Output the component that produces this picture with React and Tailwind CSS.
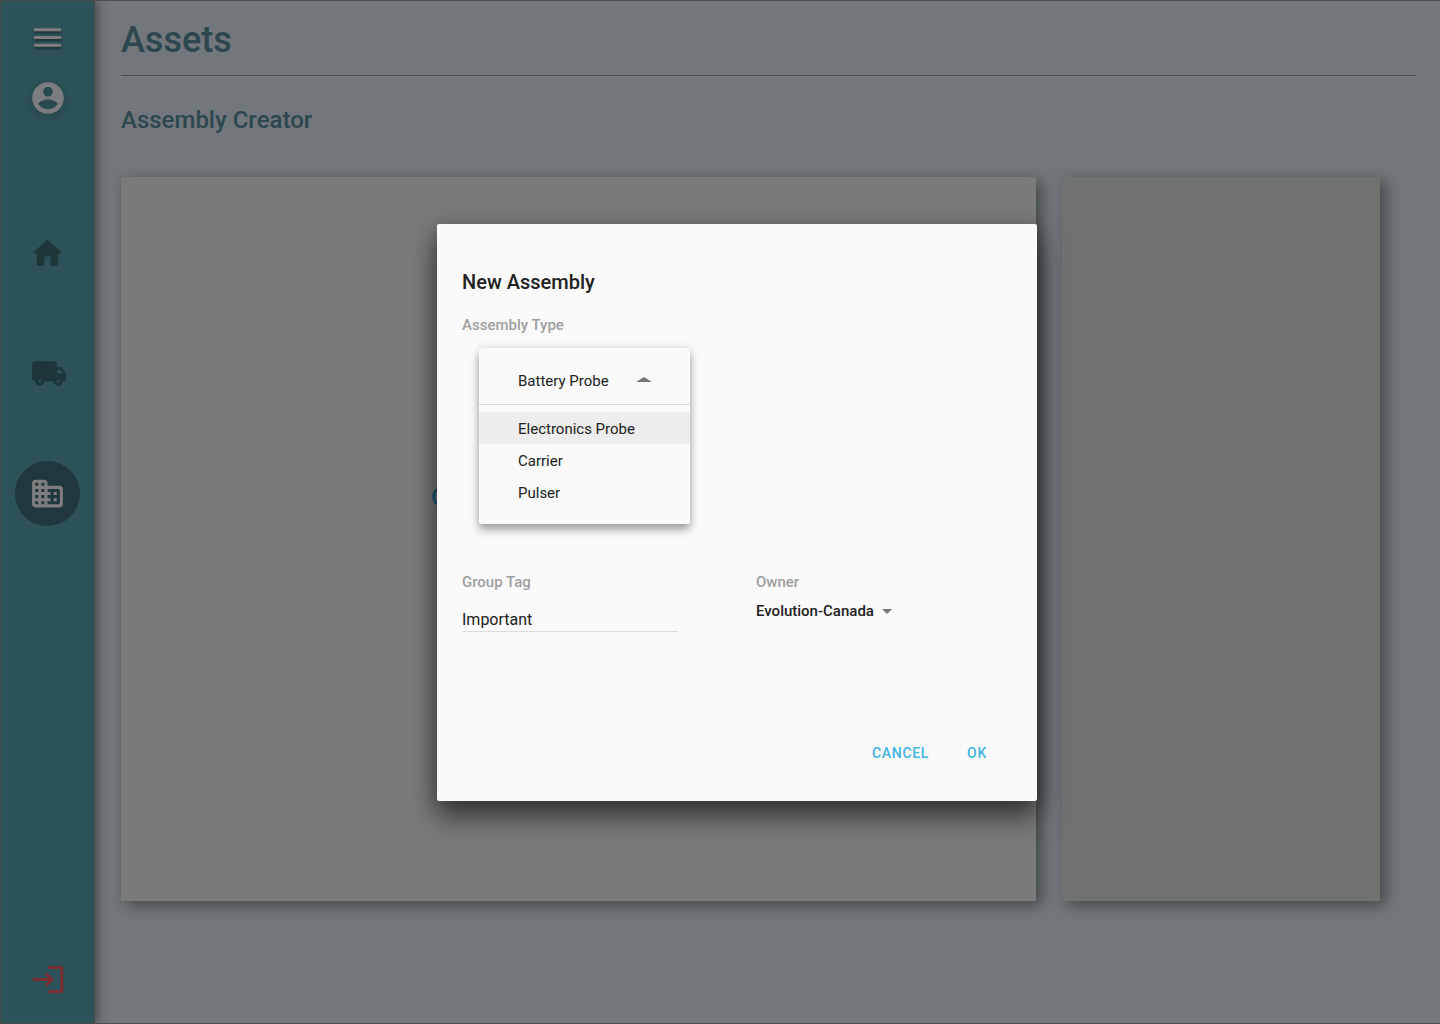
import { useState } from "react";

const icons = {
  menu: "M4 18h16c.55 0 1-.45 1-1s-.45-1-1-1H4c-.55 0-1 .45-1 1s.45 1 1 1zm0-5h16c.55 0 1-.45 1-1s-.45-1-1-1H4c-.55 0-1 .45-1 1s.45 1 1 1zM3 7c0 .55.45 1 1 1h16c.55 0 1-.45 1-1s-.45-1-1-1H4c-.55 0-1 .45-1 1z",
  account:
    "M12 2C6.48 2 2 6.48 2 12s4.48 10 10 10 10-4.48 10-10S17.52 2 12 2zm0 3c1.66 0 3 1.34 3 3s-1.34 3-3 3-3-1.34-3-3 1.34-3 3-3zm0 14.2c-2.5 0-4.71-1.28-6-3.22.03-1.99 4-3.08 6-3.08 1.99 0 5.97 1.09 6 3.08-1.29 1.94-3.5 3.22-6 3.22z",
  home: "M10 19v-5h4v5c0 .55.45 1 1 1h3c.55 0 1-.45 1-1v-7h1.7c.46 0 .68-.57.33-.87L12.67 3.6c-.38-.34-.96-.34-1.34 0l-8.36 7.53c-.34.3-.13.87.33.87H5v7c0 .55.45 1 1 1h3c.55 0 1-.45 1-1z",
  truck:
    "M19.5 8H17V6c0-1.1-.9-2-2-2H3c-1.1 0-2 .9-2 2v9c0 1.1.9 2 2 2 0 1.66 1.34 3 3 3s3-1.34 3-3h6c0 1.66 1.34 3 3 3s3-1.34 3-3h1c.55 0 1-.45 1-1v-3.33c0-.43-.14-.85-.4-1.2L20.3 8.4c-.19-.25-.49-.4-.8-.4zM6 18c-.55 0-1-.45-1-1s.45-1 1-1 1 .45 1 1-.45 1-1 1zm13.5-8.5l1.96 2.5H17V9.5h2.5zM18 18c-.55 0-1-.45-1-1s.45-1 1-1 1 .45 1 1-.45 1-1 1z",
  building:
    "M12 7V5c0-1.1-.9-2-2-2H4c-1.1 0-2 .9-2 2v14c0 1.1.9 2 2 2h16c1.1 0 2-.9 2-2V9c0-1.1-.9-2-2-2h-8zM6 19H4v-2h2v2zm0-4H4v-2h2v2zm0-4H4V9h2v2zm0-4H4V5h2v2zm4 12H8v-2h2v2zm0-4H8v-2h2v2zm0-4H8V9h2v2zm0-4H8V5h2v2zm9 12h-7v-2h2v-2h-2v-2h2v-2h-2V9h7c.55 0 1 .45 1 1v8c0 .55-.45 1-1 1zm-1-8h-2v2h2v-2zm0 4h-2v2h2v-2z",
};

function Icon({ name, className, viewBox = "0 0 24 24" }) {
  return (
    <svg viewBox={viewBox} fill="currentColor" aria-hidden="true" className={className}>
      <path d={icons[name]} />
    </svg>
  );
}

function Sidebar() {
  return (
    <nav
      aria-label="Main"
      className="relative flex w-[94px] shrink-0 flex-col items-center border-r border-[#4b4b4b] bg-[#2d5259] pt-[18px] pb-[23px] text-[#1e353a] shadow-[2px_0_10px_rgba(0,0,0,0.45)]"
    >
      <button aria-label="Menu" className="text-[#7f7d7d]">
        <Icon name="menu" className="size-[37px] drop-shadow-[0_2px_1px_rgba(0,0,0,0.4)]" />
      </button>
      <button aria-label="Account" className="mt-[23px] text-[#7b7d7e]">
        <Icon name="account" className="size-[38px] drop-shadow-[0_3px_5px_rgba(0,0,0,0.2)]" />
      </button>
      <div className="mt-[104px] flex flex-col items-center gap-14">
        <a href="#home" aria-label="Home" className="grid size-16 place-items-center">
          <Icon name="home" className="size-[37px]" />
        </a>
        <a href="#shipping" aria-label="Shipping" className="grid size-16 place-items-center">
          <Icon name="truck" viewBox="-1 0 24 24" className="size-[37px] overflow-visible" />
        </a>
        <a
          href="#assets"
          aria-label="Assets"
          aria-current="page"
          className="grid size-[65px] place-items-center rounded-full bg-[#1f373d] text-[#7f7d7d]"
        >
          <Icon name="building" className="size-[37px]" />
        </a>
      </div>
      <button aria-label="Log out" className="mt-auto text-[#7b2e31]">
        <svg
          viewBox="0 0 40 40"
          className="size-10"
          fill="none"
          stroke="currentColor"
          strokeWidth="3"
          strokeLinecap="round"
          strokeLinejoin="round"
          aria-hidden="true"
        >
          <path d="M6 19.500h17.500M18.700 14.200l5.300 5.300-5.300 5.300" />
          <path d="M21.300 7.500h12.500v24H21.300" />
        </svg>
      </button>
    </nav>
  );
}

const types = ["Electronics Probe", "Carrier", "Pulser"];

function TypePicker() {
  const [value, setValue] = useState("Battery Probe");
  return (
    <div className="ml-[17px] w-[211px] rounded-xs bg-[#fafafa] pb-4 text-[15px] shadow-[0_0_8px_rgba(0,0,0,0.12),0_6px_8px_rgba(0,0,0,0.32)]">
      <button
        type="button"
        aria-haspopup="listbox"
        aria-expanded="true"
        aria-labelledby="type-label"
        className="flex h-[57px] w-full items-center border-b border-[#d8d8d8] pt-2.5 pr-[38px] pl-[39px] text-left"
      >
        <span className="flex-1">{value}</span>
        <svg viewBox="0 0 16 5" className="mb-[3px] h-[5px] w-4" fill="#757575" aria-hidden="true">
          <path d="M0 5 8 0l8 5z" />
        </svg>
      </button>
      <ul role="listbox" aria-labelledby="type-label" className="pt-[7px]">
        {types.map((t, i) => (
          <li key={t} role="option" aria-selected={i === 0}>
            <button
              type="button"
              onClick={() => setValue(t)}
              className={
                i === 0
                  ? "h-8 w-full bg-[#ededed] pt-0.5 pl-[39px] text-left"
                  : "h-8 w-full pt-0.5 pl-[39px] text-left"
              }
            >
              {t}
            </button>
          </li>
        ))}
      </ul>
    </div>
  );
}

function AssemblyDialog() {
  return (
    <div className="absolute inset-0 flex items-center justify-center pt-px pl-[33px]">
      <form
        role="dialog"
        aria-labelledby="dialog-title"
        onSubmit={(e) => e.preventDefault()}
        className="w-[600px] rounded-xs bg-[#fafafa] px-[25px] pt-11 pb-[30px] text-[#212121] shadow-[0_4px_20px_rgba(0,0,0,0.25),0_16px_28px_rgba(0,0,0,0.5)]"
      >
        <h2 id="dialog-title" className="text-xl leading-7 font-medium">
          New Assembly
        </h2>
        <p id="type-label" className="mt-[19px] mb-[13px] text-[15px] leading-5 font-medium text-[#9e9e9e]">
          Assembly Type
        </p>
        <TypePicker />
        <div className="mt-12 grid grid-cols-[216px_1fr] gap-x-[78px]">
          <div>
            <label htmlFor="tag" className="block text-[15px] leading-5 font-medium text-[#9e9e9e]">
              Group Tag
            </label>
            <input
              id="tag"
              defaultValue="Important"
              className="mt-4 h-6 w-full border-b border-[#dcdcdc] bg-transparent p-0 text-base leading-6 outline-none"
            />
          </div>
          <div>
            <label htmlFor="owner" className="block text-[15px] leading-5 font-medium text-[#9e9e9e]">
              Owner
            </label>
            <div className="mt-[9px] flex items-center gap-2">
              <select
                id="owner"
                className="h-5 appearance-none bg-transparent text-[15px] leading-5 font-medium outline-none"
              >
                <option>Evolution-Canada</option>
              </select>
              <svg viewBox="0 0 10 5" className="h-[5px] w-2.5" fill="#757575" aria-hidden="true">
                <path d="M0 0h10L5 5z" />
              </svg>
            </div>
          </div>
        </div>
        <div className="mt-[103px] flex justify-end gap-1.5 pr-[9px] text-sm font-medium tracking-wider text-[#41b4e4]">
          <button type="button" className="h-9 px-4">
            CANCEL
          </button>
          <button type="submit" className="h-9 px-4">
            OK
          </button>
        </div>
      </form>
    </div>
  );
}

export default function App() {
  return (
    <div className="relative flex min-h-screen overflow-hidden border-y border-l border-[#4b4b4b] bg-[#71777a] font-['Roboto',sans-serif]">
      <Sidebar />
      <main className="flex flex-1 flex-col pt-3 pr-6 pb-[122px] pl-[26px] text-[#2d474f]">
        <h1 className="border-b border-[#484e50] pb-2 text-4xl leading-[54px] font-medium">Assets</h1>
        <h2 className="mt-7 text-2xl leading-8 font-medium">Assembly Creator</h2>
        <div className="mt-[41px] flex flex-1 gap-[26px] pr-9">
          <section className="flex flex-1 items-center bg-[#7a7a7a] pl-[310px] text-2xl font-medium text-[#1a5a78] shadow-[5px_4px_14px_rgba(0,0,0,0.42)]">
            <span className="pb-[84px]">C</span>
          </section>
          <aside className="w-[318px] bg-[#70726f] shadow-[5px_4px_14px_rgba(0,0,0,0.42)]" />
        </div>
      </main>
      <AssemblyDialog />
    </div>
  );
}
